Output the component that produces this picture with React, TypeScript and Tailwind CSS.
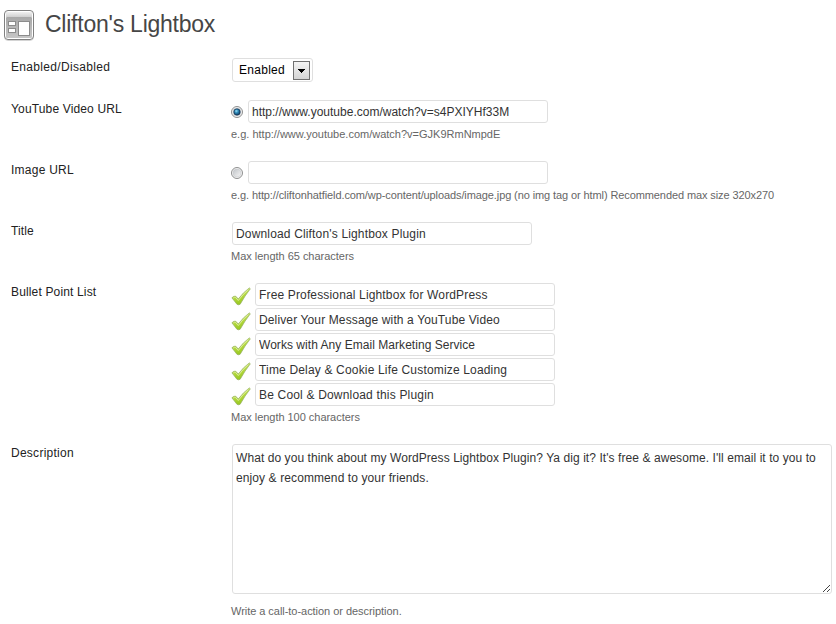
import type { ReactNode } from "react";

const field =
  "box-border block h-[23px] rounded-[3px] border border-[#dfdfdf] bg-white px-[3px] text-[12px] leading-[15px] text-[#333] outline-none";

function ThemeIcon() {
  return (
    <svg width="34" height="34" viewBox="0 0 34 34" className="shrink-0">
      <defs>
        <linearGradient id="head" x1="0" y1="0" x2="0" y2="1">
          <stop offset="0" stopColor="#f0f0f0" />
          <stop offset="1" stopColor="#cfcfcf" />
        </linearGradient>
        <linearGradient id="frame" x1="0" y1="0" x2="0" y2="1">
          <stop offset="0" stopColor="#a8a8a8" />
          <stop offset="1" stopColor="#c6c6c6" />
        </linearGradient>
      </defs>
      <rect x="2.500" y="3.500" width="29" height="29" rx="3.500" fill="none" stroke="#d4d4d4" />
      <rect x="2.500" y="2.500" width="29" height="29" rx="3.500" fill="#fff" stroke="#808080" />
      <rect x="4" y="4" width="26" height="5" fill="url(#head)" />
      <rect x="4" y="9" width="26" height="21" rx="1" fill="url(#frame)" />
      <g fill="#fff" stroke="#8c8c8c">
        <rect x="6.500" y="13.500" width="7" height="4" />
        <rect x="6.500" y="20.500" width="7" height="4" />
        <rect x="16.500" y="13.500" width="11" height="14" />
      </g>
    </svg>
  );
}

function Check() {
  return (
    <svg width="20" height="19" viewBox="0 0 20 19" className="mt-1 shrink-0">
      <defs>
        <linearGradient id="leaf" x1="0" y1="0" x2=".3" y2="1">
          <stop offset="0" stopColor="#dcea94" />
          <stop offset=".5" stopColor="#b9dc45" />
          <stop offset="1" stopColor="#98c81f" />
        </linearGradient>
      </defs>
      <path
        d="M.9 10.800Q2.800 8.700 4.700 9.200L7.300 12Q12 5.500 18.300 .9L19.300 1.800Q14 8.500 9.200 17.200Q7.600 18.400 5.900 17.200Z"
        fill="url(#leaf)"
        stroke="#93ad62"
        strokeWidth=".7"
        strokeLinejoin="round"
      />
      <path d="M2.300 11Q3.500 9.800 4.400 10.300L7.300 13.500Q11.500 7.500 17.300 2.600" fill="none" stroke="#e6f3ae" strokeWidth=".8" />
    </svg>
  );
}

function Radio({ on }: { on?: boolean }) {
  return (
    <svg width="12" height="12" viewBox="0 0 12 12" className="mr-[5px] shrink-0">
      <defs>
        <linearGradient id="dish" x1="0" y1="0" x2="1" y2="1">
          <stop offset="0" stopColor="#bfc3c7" />
          <stop offset="1" stopColor="#f6f6f6" />
        </linearGradient>
        <radialGradient id="dot" cx=".4" cy=".35" r=".7">
          <stop offset="0" stopColor="#9be0f7" />
          <stop offset=".4" stopColor="#2f8bb9" />
          <stop offset="1" stopColor="#0b2f55" />
        </radialGradient>
      </defs>
      <circle cx="6" cy="6" r="5.500" fill="#f4f4f4" stroke="#8e8f8f" />
      <circle cx="6" cy="6" r="4" fill="url(#dish)" stroke="#c4c7ca" strokeWidth=".5" />
      {on && <circle cx="6" cy="6" r="3.200" fill="url(#dot)" stroke="#143453" strokeWidth=".7" />}
    </svg>
  );
}

function Row({ label, tracking, height, children }: { label: string; tracking: string; height: string; children: ReactNode }) {
  return (
    <div className={`flex ${height}`}>
      <div className={`w-[220px] shrink-0 text-[12px] leading-[18px] text-[#222] ${tracking}`}>{label}</div>
      <div className="min-w-0 flex-1">{children}</div>
    </div>
  );
}

function Help({ className, children }: { className: string; children: string }) {
  return <p className={`whitespace-nowrap text-[11px] leading-[18px] text-[#666] ${className}`}>{children}</p>;
}

const bullets = [
  { text: "Free Professional Lightbox for WordPress", tracking: "tracking-[0.15px]" },
  { text: "Deliver Your Message with a YouTube Video", tracking: "tracking-[0.13px]" },
  { text: "Works with Any Email Marketing Service", tracking: "tracking-[0.04px]" },
  { text: "Time Delay & Cookie Life Customize Loading", tracking: "tracking-[0.17px]" },
  { text: "Be Cool & Download this Plugin", tracking: "tracking-[0.18px]" },
];

// Dots of the textarea's resize grip, two diagonals on a 7px grid.
const grip = [[0, 6], [1, 5], [2, 4], [3, 3], [4, 2], [5, 1], [6, 0], [4, 6], [5, 5], [6, 4]];

export default function App() {
  return (
    <div className="h-[624px] w-[836px] overflow-hidden bg-white font-['Liberation_Sans',Arial,sans-serif]">
      <header className="flex h-[58px] items-start pl-[2px] pt-2">
        <ThemeIcon />
        <h1 className="ml-[9px] text-[23px] leading-[32px] tracking-[-0.24px] text-[#464646]">Clifton's Lightbox</h1>
      </header>
      <main className="pl-[11px]">
        <Row label="Enabled/Disabled" tracking="tracking-[0.33px]" height="h-[42px]">
          <div className="ml-px flex h-6 w-[81px] items-center justify-between rounded-[3px] border border-[#dfdfdf] pl-[6px] pr-[2px] text-[12px] text-black">
            <span className="tracking-[0.28px]">Enabled</span>
            <span className="flex h-[19px] w-[17px] items-center justify-center border border-[#707070] bg-linear-to-b from-[#f4f4f4] to-[#d4d4d4]">
              <svg width="7" height="4" viewBox="0 0 7 4" className="mt-px">
                <path d="M0 0H7V1H6V2H5V3H4V4H3V3H2V2H1V1H0Z" fill="#000" />
              </svg>
            </span>
          </div>
        </Row>
        <Row label="YouTube Video URL" tracking="tracking-[0.15px]" height="h-[61px]">
          <div className="flex items-center">
            <Radio on />
            <input className={`${field} w-[300px]`} defaultValue="http://www.youtube.com/watch?v=s4PXIYHf33M" />
          </div>
          <Help className="mt-[2px] tracking-normal">e.g. http://www.youtube.com/watch?v=GJK9RmNmpdE</Help>
        </Row>
        <Row label="Image URL" tracking="tracking-[0.24px]" height="h-[61px]">
          <div className="flex items-center">
            <Radio />
            <input className={`${field} w-[300px]`} />
          </div>
          <Help className="mt-[2px] tracking-[-0.1px]">
            e.g. http://cliftonhatfield.com/wp-content/uploads/image.jpg (no img tag or html) Recommended max size 320x270
          </Help>
        </Row>
        <Row label="Title" tracking="tracking-[0.1px]" height="h-[61px]">
          <input className={`${field} ml-px w-[300px] tracking-[0.16px]`} defaultValue="Download Clifton's Lightbox Plugin" />
          <Help className="mt-[2px] tracking-[-0.02px]">Max length 65 characters</Help>
        </Row>
        <Row label="Bullet Point List" tracking="tracking-[0.15px]" height="h-[161px]">
          <div className="flex flex-col gap-[2px]">
            {bullets.map((b) => (
              <div key={b.text} className="flex h-[23px] gap-1">
                <Check />
                <input className={`${field} w-[300px] ${b.tracking}`} defaultValue={b.text} />
              </div>
            ))}
          </div>
          <Help className="mt-[2px] tracking-[-0.03px]">Max length 100 characters</Help>
        </Row>
        <Row label="Description" tracking="tracking-[0.26px]" height="h-[180px]">
          <div className="relative ml-px h-[150px] w-[600px]">
            <div className="h-full whitespace-nowrap rounded-[3px] border border-[#dfdfdf] px-[3px] py-[3px] text-[12px] leading-5 text-[#333]">
              <div className="tracking-[0.07px]">What do you think about my WordPress Lightbox Plugin? Ya dig it? It's free &amp; awesome. I'll email it to you to</div>
              <div className="tracking-[0.1px]">enjoy &amp; recommend to your friends.</div>
            </div>
            <svg width="7" height="7" viewBox="0 0 7 7" className="absolute bottom-[2px] right-[2px]">
              {grip.map(([x, y]) => (
                <rect key={`${x}-${y}`} x={x} y={y} width="1" height="1" fill="#444" />
              ))}
            </svg>
          </div>
          <Help className="mt-2 tracking-[-0.04px]">Write a call-to-action or description.</Help>
        </Row>
      </main>
    </div>
  );
}
